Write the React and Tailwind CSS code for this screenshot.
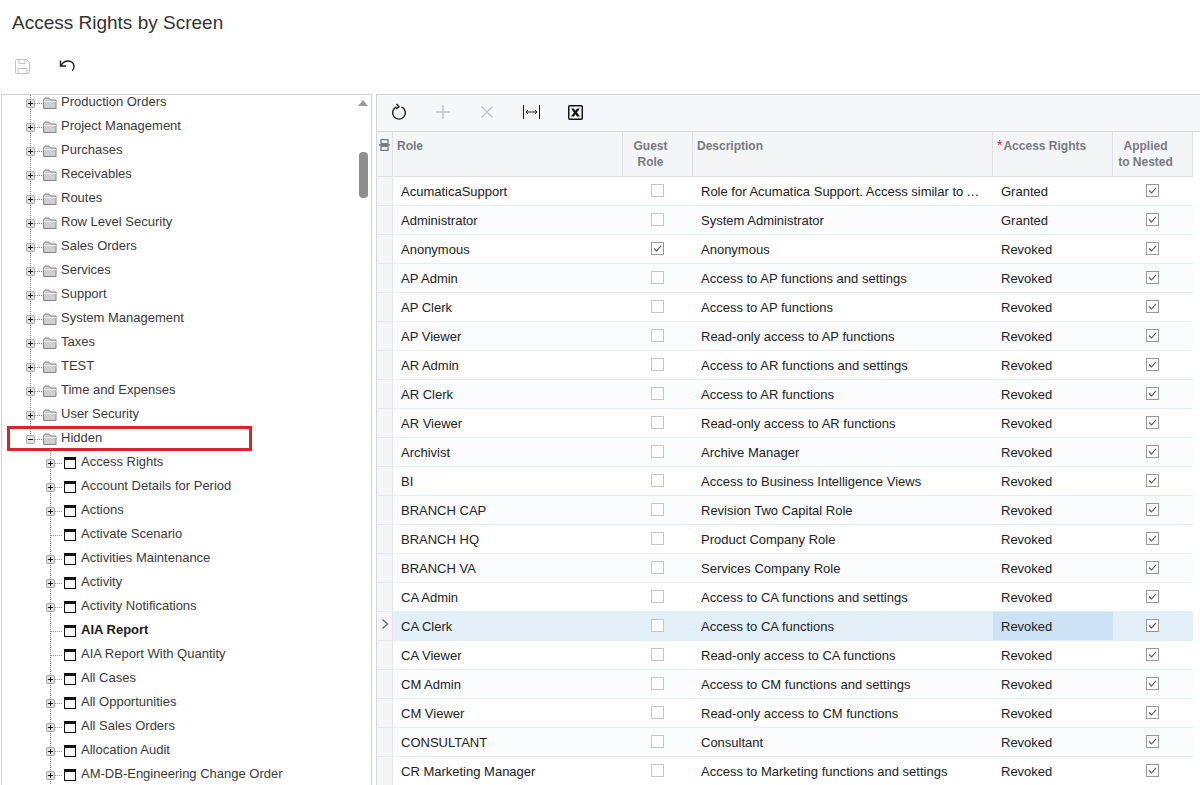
import React from 'react';

const treeItems = [
  { label: 'Production Orders', level: 1, open: false },
  { label: 'Project Management', level: 1 },
  { label: 'Purchases', level: 1 },
  { label: 'Receivables', level: 1 },
  { label: 'Routes', level: 1 },
  { label: 'Row Level Security', level: 1 },
  { label: 'Sales Orders', level: 1 },
  { label: 'Services', level: 1 },
  { label: 'Support', level: 1 },
  { label: 'System Management', level: 1 },
  { label: 'Taxes', level: 1 },
  { label: 'TEST', level: 1 },
  { label: 'Time and Expenses', level: 1 },
  { label: 'User Security', level: 1 },
  { label: 'Hidden', level: 1, open: true, marked: true },
  { label: 'Access Rights', level: 2 },
  { label: 'Account Details for Period', level: 2 },
  { label: 'Actions', level: 2 },
  { label: 'Activate Scenario', level: 2, leaf: true },
  { label: 'Activities Maintenance', level: 2 },
  { label: 'Activity', level: 2 },
  { label: 'Activity Notifications', level: 2 },
  { label: 'AIA Report', level: 2, leaf: true, bold: true },
  { label: 'AIA Report With Quantity', level: 2, leaf: true },
  { label: 'All Cases', level: 2 },
  { label: 'All Opportunities', level: 2 },
  { label: 'All Sales Orders', level: 2 },
  { label: 'Allocation Audit', level: 2 },
  { label: 'AM-DB-Engineering Change Order', level: 2 },
];

const roles = [
  ['AcumaticaSupport', 'Role for Acumatica Support. Access similar to Administrator role', 'Granted'],
  ['Administrator', 'System Administrator', 'Granted'],
  ['Anonymous', 'Anonymous', 'Revoked', true],
  ['AP Admin', 'Access to AP functions and settings', 'Revoked'],
  ['AP Clerk', 'Access to AP functions', 'Revoked'],
  ['AP Viewer', 'Read-only access to AP functions', 'Revoked'],
  ['AR Admin', 'Access to AR functions and settings', 'Revoked'],
  ['AR Clerk', 'Access to AR functions', 'Revoked'],
  ['AR Viewer', 'Read-only access to AR functions', 'Revoked'],
  ['Archivist', 'Archive Manager', 'Revoked'],
  ['BI', 'Access to Business Intelligence Views', 'Revoked'],
  ['BRANCH CAP', 'Revision Two Capital Role', 'Revoked'],
  ['BRANCH HQ', 'Product Company Role', 'Revoked'],
  ['BRANCH VA', 'Services Company Role', 'Revoked'],
  ['CA Admin', 'Access to CA functions and settings', 'Revoked'],
  ['CA Clerk', 'Access to CA functions', 'Revoked'],
  ['CA Viewer', 'Read-only access to CA functions', 'Revoked'],
  ['CM Admin', 'Access to CM functions and settings', 'Revoked'],
  ['CM Viewer', 'Read-only access to CM functions', 'Revoked'],
  ['CONSULTANT', 'Consultant', 'Revoked'],
  ['CR Marketing Manager', 'Access to Marketing functions and settings', 'Revoked'],
];

const SELECTED = 'CA Clerk';
const gridCols = 'grid grid-cols-[16px_230px_70px_300px_120px_80px] w-[816px]';

// connector lines, expander and folder/window icon of one tree row
const TreeGlyph = ({ item }) => {
  const x = item.level === 1 ? 28 : 48;
  const width = item.level === 1 ? 59 : 79;
  const dots = { stroke: '#8a8a8a', strokeDasharray: '1 1', fill: 'none' };
  return (
    <svg width={width} height="24" className="shrink-0">
      {item.level === 1 && <path d={`M${x + 0.5} 0V${item.open ? 10 : 24}`} {...dots} />}
      {item.level === 2 && <path d={`M${x + 0.5} 0V24`} {...dots} />}
      <path d={`M${x + 1} 14.5H${x + 13}`} {...dots} />
      {!item.leaf && (
        <g>
          <rect x={x - 3.5} y="10.5" width="8" height="8" rx="1.5" fill="#e4e4e4" stroke="#a8a8a8" />
          <path d={`M${x - 2} 14.5h5${item.open ? '' : `M${x + 0.5} 12v5`}`} stroke="#111" fill="none" />
        </g>
      )}
      {item.level === 1 ? (
        <g>
          <path d={`M${x + 13.5} 19.5V11l1.500-2h4l1.500 2h5.500v8.500z`} fill="#cfcfd2" stroke="#858585" />
          <path d={`M${x + 14} 12.500h12`} stroke="#f4f4f4" fill="none" />
        </g>
      ) : (
        <g>
          <rect x={x + 14.5} y="8.5" width="11" height="11" fill="#fff" stroke="#111" />
          <rect x={x + 14} y="8" width="12" height="3" fill="#111" />
        </g>
      )}
    </svg>
  );
};

const TreeRow = ({ item }) => (
  <div className="relative flex h-6 items-center">
    <TreeGlyph item={item} />
    <span className={`whitespace-nowrap pt-px ${item.bold ? 'font-bold text-[#1a1a1a]' : 'text-[#3a3a3a]'}`}>
      {item.label}
    </span>
    {item.marked && (
      <div className="absolute left-[5px] top-[1px] h-[25px] w-[245px] border-[3px] border-[#d9232e]" />
    )}
  </div>
);

const Check = ({ on }) => (
  <svg width="13" height="13" viewBox="0 0 13 13" className="-mt-[3px] mr-[2px]">
    <rect x="0.5" y="0.5" width="12" height="12" fill="#fff" stroke={on ? '#9a9a9a' : '#c6c6c6'} />
    {on && <path d="M3 6.5l2.5 2.5L10 3.8" fill="none" stroke="#555" strokeWidth="1.1" />}
  </svg>
);

const HeadCell = ({ children, center }) => (
  <div
    className={`border-r border-[#dfe1e4] pl-1 pt-[6px] text-[12px] font-bold leading-4 text-[#777b80] ${center ? 'pr-[18px] text-center' : 'pr-1'}`}
  >
    {children}
  </div>
);

const GridRow = ({ role, description, rights, guest }) => {
  const selected = role === SELECTED;
  const cell = 'flex items-center border-b border-[#e6eef6] h-[29px] pt-px';
  return (
    <div className={`${gridCols} ${selected ? 'bg-[#e3f0fa]' : 'even:bg-[#fafcfe]'}`}>
      <div className="flex h-[29px] items-center justify-center border-b border-r border-[#e4e6e9] bg-[#f4f5f7]">
        {selected && (
          <svg width="8" height="12" viewBox="0 0 8 12" className="-mt-[4px]">
            <path d="M1.5 1.5L6.5 6l-5 4.5" fill="none" stroke="#666" strokeWidth="1.4" />
          </svg>
        )}
      </div>
      <div className={`${cell} px-2`}>{role}</div>
      <div className={`${cell} justify-center`}><Check on={guest} /></div>
      <div className={`${cell} px-2`}>
        <span className="w-full truncate">{description}</span>
      </div>
      <div className={`${cell} px-2 ${selected ? 'bg-[#cbe2f5]' : ''}`}>{rights}</div>
      <div className={`${cell} justify-center`}><Check on /></div>
    </div>
  );
};

export default function App() {
  return (
    <div className="h-[785px] w-[1200px] overflow-hidden bg-white font-['Liberation_Sans',Arial,sans-serif] text-[13px] text-[#222]">
      <h1 className="h-[44px] pl-3 pt-[9px] text-[19px] leading-[27px] text-[#333]">Access Rights by Screen</h1>

      <div className="flex h-[50px] items-center gap-[29px] pb-[6px] pl-[15px]">
        <svg width="15" height="15" viewBox="0 0 15 15" fill="none" stroke="#c4c4c4">
          <path d="M1.5.5h10l3 3v9a2 2 0 0 1-2 2h-11a1 1 0 0 1-1-1v-12a1 1 0 0 1 1-1z" />
          <path d="M4 .5v4h6v-4M3 14.5v-5h9v5" />
        </svg>
        <svg width="17" height="14" viewBox="0 0 17 14" fill="none" stroke="#1a1a1a" strokeWidth="1.4">
          <path d="M2 6.5C4 3 6.5 2 9 2c3.5 0 6 2.4 6 5.4 0 1.600-.6 3-1.700 4" />
          <path d="M1.500 1.500v5.500H7" />
        </svg>
      </div>

      <div className="flex h-[691px] gap-1">
        <div className="ml-px flex w-[371px] shrink-0 border-l border-r border-t border-[#d4d4d4]">
          <div className="min-w-0 flex-1 overflow-hidden">
            <div className="-mt-[6px]">
              {treeItems.map(item => (
                <TreeRow key={item.label} item={item} />
              ))}
            </div>
          </div>
          <div className="flex w-[16px] shrink-0 flex-col items-center">
            <div className="mt-[5px] h-0 w-0 border-x-[5px] border-b-[6px] border-x-transparent border-b-[#9a9a9a]" />
            <div className="mt-[46px] h-[46px] w-[9px] rounded-[4px] bg-[#8e8e8e]" />
          </div>
        </div>

        <div className="flex min-w-0 flex-1 flex-col border-l border-t border-[#d4d4d4]">
          <div className="flex h-[37px] shrink-0 items-center gap-[28px] border-b border-[#d8d8d8] bg-[#f6f7f9] pb-[2px] pl-[14px]">
            <svg width="16" height="18" viewBox="0 0 16 18" fill="none" stroke="#1a1a1a" strokeWidth="1.400">
              <path d="M5.500 3.800A6.400 6.400 0 1 0 10.500 3.800" />
              <path d="M5.500 1L8 3.800 5.200 6" />
            </svg>
            <svg width="16" height="16" viewBox="0 0 16 16" fill="none" stroke="#c2c4c7" strokeWidth="1.500">
              <path d="M8 1v14M1 8h14" />
            </svg>
            <svg width="16" height="16" viewBox="0 0 16 16" fill="none" stroke="#c2c4c7" strokeWidth="1.300">
              <path d="M2.500 2.500l11 11M13.500 2.500l-11 11" />
            </svg>
            <svg width="17" height="14" viewBox="0 0 17 14" fill="none" stroke="#1a1a1a">
              <path d="M.5 0v14M16.500 0v14M3 7h11" />
              <path d="M5 5L3 7l2 2M12 5l2 2-2 2" />
            </svg>
            <svg width="15" height="15" viewBox="0 0 15 15">
              <rect x="0.750" y="0.750" width="13.500" height="13.500" rx="1" fill="#fff" stroke="#111" strokeWidth="1.500" />
              <path d="M3 3.500h3l1.500 2.300L9 3.500h3L9 7.500l3 4H9L7.500 9.200 6 11.500H3l3-4z" fill="#111" />
            </svg>
          </div>

          <div className={`${gridCols} h-[45px] shrink-0 border-b border-[#dfe1e4] bg-[#f4f5f7]`}>
            <div className="flex justify-center border-r border-[#dfe1e4] pt-[7px]">
              <svg width="11" height="12" viewBox="0 0 11 12" fill="none" stroke="#777b80" strokeWidth="1.300">
                <path d="M2 .7h7v4H2zM2 7.300h7v4H2zM0 6h11" />
              </svg>
            </div>
            <HeadCell>Role</HeadCell>
            <HeadCell center>Guest<br />Role</HeadCell>
            <HeadCell>Description</HeadCell>
            <HeadCell>
              <span className="mr-px text-[14px] font-normal leading-none text-[#d9232e]">*</span>Access Rights
            </HeadCell>
            <HeadCell center>Applied<br />to Nested</HeadCell>
          </div>

          <div className="flex-1 overflow-hidden">
            {roles.map(([role, description, rights, guest]) => (
              <GridRow key={role} role={role} description={description} rights={rights} guest={guest} />
            ))}
          </div>
        </div>
      </div>
    </div>
  );
}
